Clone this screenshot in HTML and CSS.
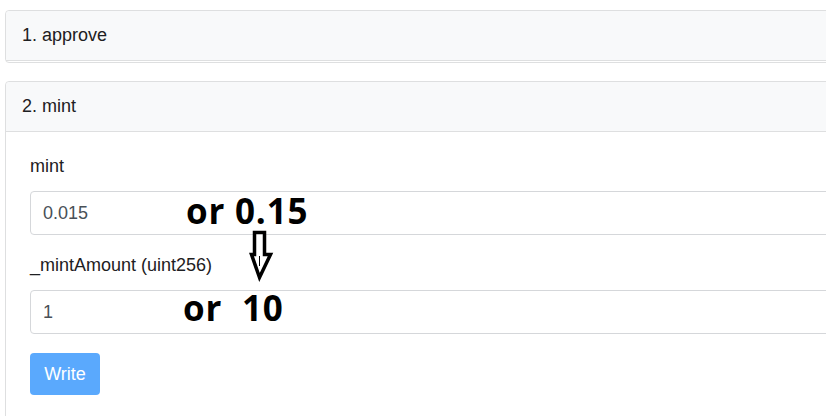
FILE: index.html
```html
<!DOCTYPE html>
<html>
<head>
<meta charset="utf-8">
<link rel="stylesheet" href="styles.css">
</head>
<body>
<div class="page">
  <div class="card collapsed">
    <div class="card-header">1. approve</div>
  </div>
  <div class="card">
    <div class="card-header">2. mint</div>
    <div class="card-body">
      <div class="form-group">
        <label class="label">mint</label>
        <div class="input">0.015</div>
      </div>
      <div class="form-group">
        <label class="label">_mintAmount (uint256)</label>
        <div class="input">1</div>
      </div>
      <button class="btn">Write</button>
    </div>
  </div>
  <div class="note note-1">or 0.15</div>
  <div class="note note-2">or  10</div>
  <svg class="arrow" width="30" height="56" viewBox="245 228 30 56">
    <polygon points="254.5,232.5 264.5,232.5 264.5,254.5 270.5,254.5 259.5,277.5 251.5,254.5 254.5,254.5" fill="#fff" stroke="#000" stroke-width="3.5" stroke-linejoin="miter"/>
    <line x1="259.5" y1="256" x2="259.5" y2="266" stroke="#000" stroke-width="1"/>
  </svg>
</div>
</body>
</html>
```
FILE: styles.css
```css
html, body {
  margin: 0;
  padding: 0;
  overflow: hidden;
  background: #fff;
}
.page {
  position: relative;
  padding: 10px 0 0 5px;
  width: 900px;
  height: 416px;
  font-family: "Liberation Sans", Arial, sans-serif;
  font-size: 18px;
  line-height: 27px;
  color: #1e2022;
}
.card {
  border: 1px solid #dedfe0;
  border-radius: 4px;
  background: #fff;
  margin-bottom: 18px;
}
.card.collapsed {
  padding-bottom: 1px;
}
.card-header {
  background: #f8f9fa;
  border-bottom: 1px solid #dedfe0;
  padding: 11px 16px;
  border-radius: 4px 4px 0 0;
}
.card-body {
  padding: 21px 24px 40px 24px;
}
.form-group {
  display: flex;
  flex-direction: column;
  gap: 11px;
  margin-bottom: 17px;
}
.label {
  display: block;
}
.input {
  height: 42px;
  border: 1px solid #d5d7da;
  border-radius: 4px;
  padding: 0 12px;
  display: flex;
  align-items: center;
  color: #495057;
}
.btn {
  margin-top: 2px;
  width: 70px;
  height: 42px;
  border: none;
  border-radius: 4px;
  background: #5aa9fd;
  color: #fff;
  font-family: "Liberation Sans", Arial, sans-serif;
  font-size: 18px;
  padding: 0;
}
.note {
  position: absolute;
  font-family: "Open Sans", "Noto Sans", sans-serif;
  font-weight: 700;
  font-size: 35px;
  line-height: 40px;
  color: #000;
  white-space: pre;
  letter-spacing: 0.8px;
}
.note-1 {
  left: 186px;
  top: 191px;
}
.note-2 {
  left: 183px;
  top: 288px;
}
.arrow {
  position: absolute;
  left: 245px;
  top: 228px;
}
```
